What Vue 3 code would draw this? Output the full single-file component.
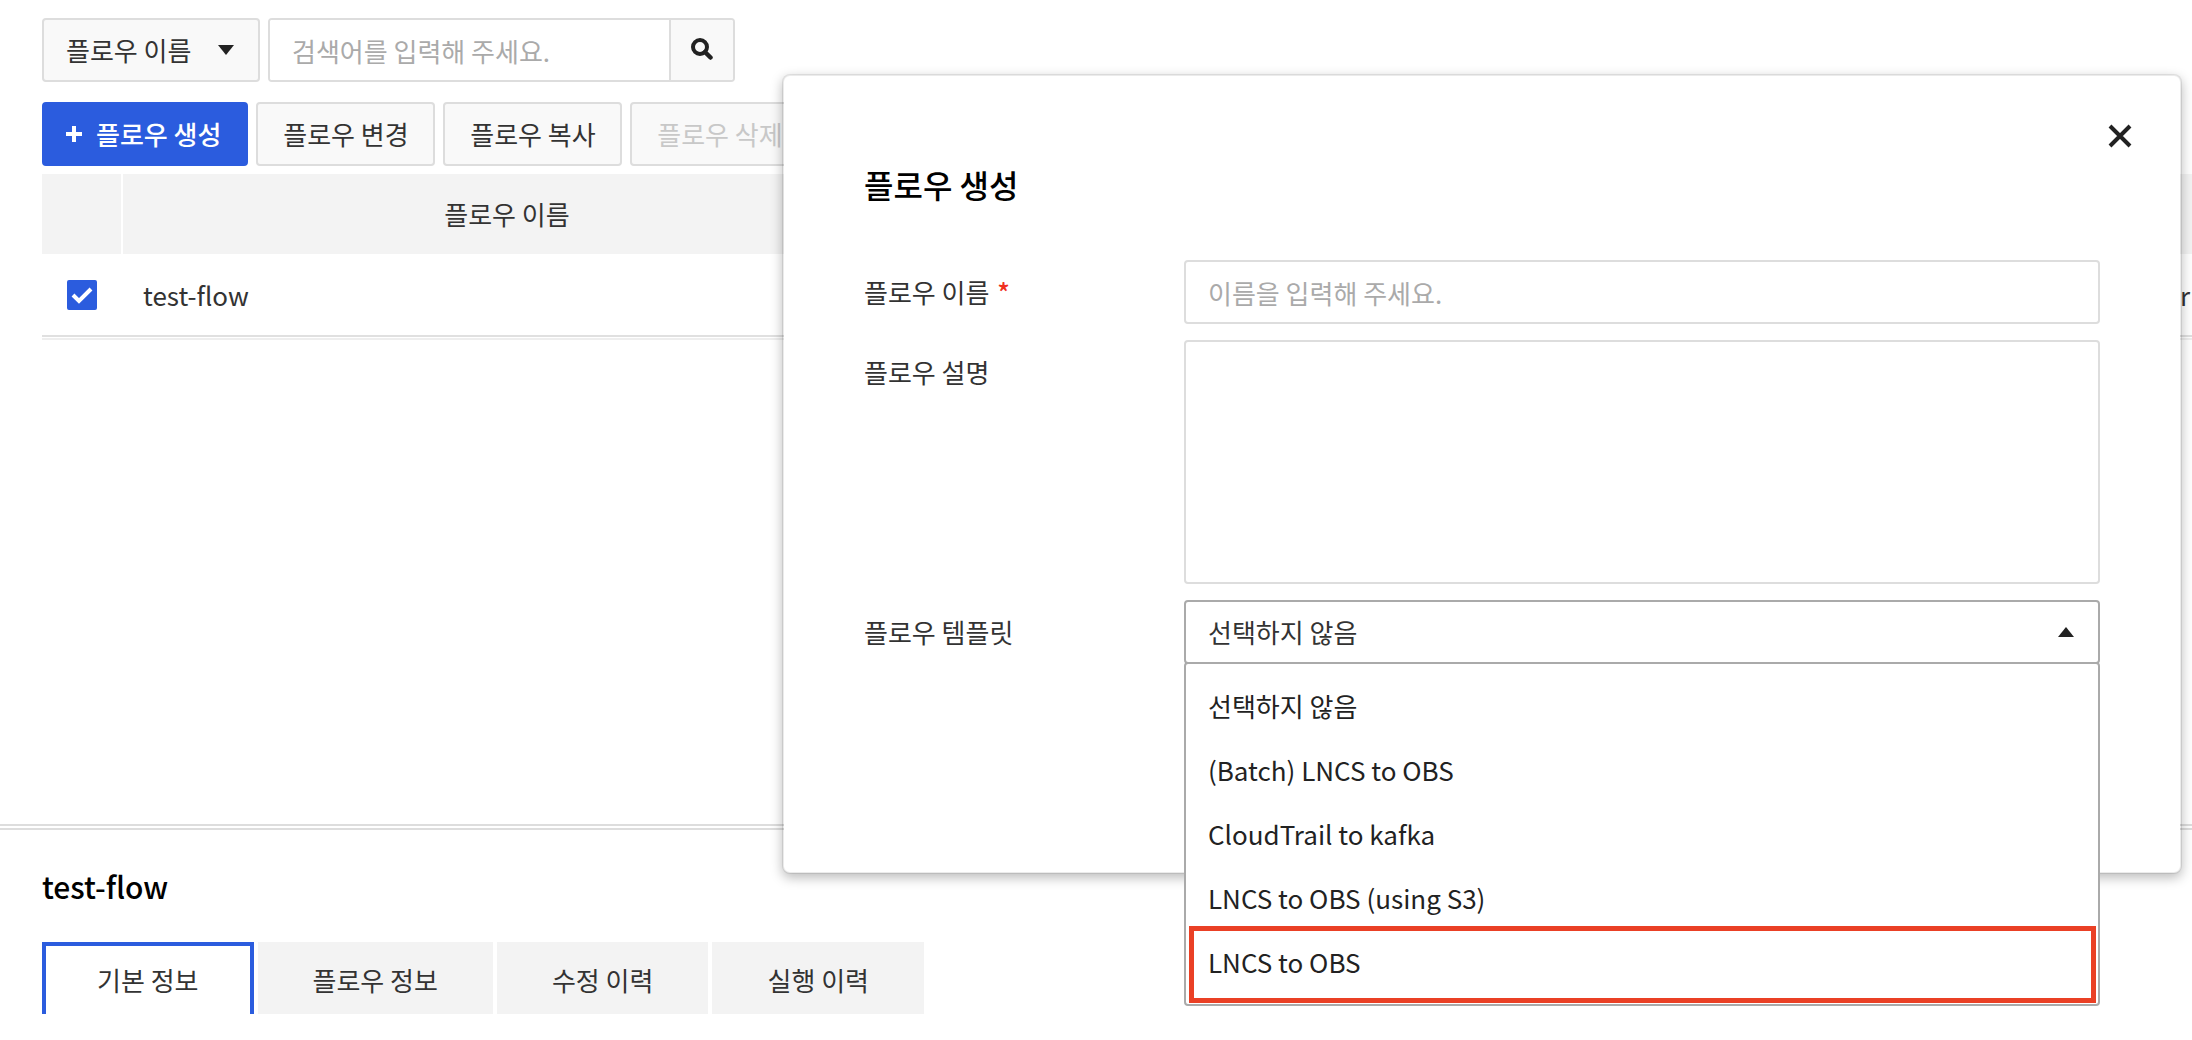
<template>
    <div class="page">
        <section class="flow-list">
            <div class="toolbar">
                <div class="select-wrap filter">
                    <select v-model="filter" class="filter-select" aria-label="플로우 이름">
                        <option value="name">플로우 이름</option>
                    </select>
                    <svg class="caret" viewBox="0 0 16 10"><path d="M0 0h16L8 10z" /></svg>
                </div>
                <form class="search" @submit.prevent>
                    <input v-model="keyword" type="text" placeholder="검색어를 입력해 주세요." aria-label="검색어를 입력해 주세요.">
                    <button type="submit">
                        <svg viewBox="0 0 22 22">
                            <circle cx="9" cy="9" r="7" fill="none" stroke="#222" stroke-width="4" />
                            <path d="M14 14l5.500 5.500" stroke="#222" stroke-width="4.500" stroke-linecap="round" />
                        </svg>
                    </button>
                </form>
            </div>
            <div class="actions">
                <button class="btn btn-primary" type="button" @click="modalOpen = true">
                    <svg viewBox="0 0 16 16"><path d="M6 0h4v6h6v4h-6v6H6v-6H0V6h6z" /></svg>
                    플로우 생성
                </button>
                <button class="btn" type="button">플로우 변경</button>
                <button class="btn" type="button">플로우 복사</button>
                <button class="btn" type="button" disabled>플로우 삭제</button>
            </div>
            <div class="table-wrap">
                <table>
                    <colgroup>
                        <col class="col-check">
                        <col class="col-name">
                        <col>
                    </colgroup>
                    <thead>
                        <tr>
                            <th></th>
                            <th>플로우 이름</th>
                            <th></th>
                        </tr>
                    </thead>
                    <tbody>
                        <tr v-for="flow in flows" :key="flow.name">
                            <td class="cell-check">
                                <label class="check">
                                    <input v-model="flow.checked" type="checkbox" :aria-label="flow.name">
                                    <svg viewBox="0 0 30 30"><path d="M6 15l6 6L24 9" /></svg>
                                </label>
                            </td>
                            <td>{{ flow.name }}</td>
                            <td class="cell-end">{{ flow.owner }}</td>
                        </tr>
                    </tbody>
                </table>
            </div>
        </section>

        <section class="flow-detail">
            <h2>test-flow</h2>
            <div class="tabs" role="tablist">
                <button
                    v-for="(tab, index) in tabs"
                    :key="tab"
                    type="button"
                    role="tab"
                    :aria-selected="activeTab === index"
                    :class="{ active: activeTab === index }"
                    @click="activeTab = index"
                >
                    {{ tab }}
                </button>
            </div>
        </section>

        <div v-if="modalOpen" class="modal" role="dialog" aria-labelledby="modal-title">
            <button class="modal-close" type="button" @click="modalOpen = false">
                <svg viewBox="0 0 24 24"><path d="M2 2l20 20M22 2L2 22" /></svg>
            </button>
            <h1 id="modal-title">플로우 생성</h1>
            <div class="form-row">
                <label for="flow-name">플로우 이름 <span class="required">*</span></label>
                <input id="flow-name" v-model="form.name" type="text" placeholder="이름을 입력해 주세요.">
            </div>
            <div class="form-row">
                <label for="flow-desc">플로우 설명</label>
                <textarea id="flow-desc" v-model="form.description"></textarea>
            </div>
            <div class="form-row">
                <label for="flow-template">플로우 템플릿</label>
                <div class="select-wrap">
                    <select id="flow-template" v-model="form.template">
                        <option v-for="item in templates" :key="item" :value="item">{{ item }}</option>
                    </select>
                    <svg class="caret" viewBox="0 0 16 10"><path d="M0 10h16L8 0z" /></svg>
                    <ul class="dropdown">
                        <li
                            v-for="(item, index) in templates"
                            :key="item"
                            :class="{ marked: index === templates.length - 1 }"
                            @click="form.template = item"
                        >
                            {{ item }}
                        </li>
                    </ul>
                </div>
            </div>
        </div>
    </div>
</template>

<script setup>
import { ref, reactive } from 'vue';

const filter = ref('name');
const keyword = ref('');
const modalOpen = ref(true);
const activeTab = ref(0);

const flows = ref([
    { name: 'test-flow', owner: 'r', checked: true },
]);

const tabs = ['기본 정보', '플로우 정보', '수정 이력', '실행 이력'];

const templates = [
    '선택하지 않음',
    '(Batch) LNCS to OBS',
    'CloudTrail to kafka',
    'LNCS to OBS (using S3)',
    'LNCS to OBS',
];

const form = reactive({
    name: '',
    description: '',
    template: templates[0],
});
</script>

<style>
body {
    margin: 0;
    background: #fff;
}
</style>

<style scoped>
* {
    box-sizing: border-box;
}

.page {
    position: relative;
    display: flex;
    flex-direction: column;
    min-height: 100vh;
    overflow: hidden;
    font-family: "Noto Sans CJK KR", sans-serif;
    font-size: 26px;
    line-height: 38px;
    color: #333;
}

button,
input,
select,
textarea {
    margin: 0;
    font: inherit;
    color: inherit;
}

button {
    cursor: pointer;
}

.flow-list {
    flex: 1;
    padding: 18px 0 0 42px;
}

.toolbar,
.actions {
    display: flex;
    gap: 8px;
}

.toolbar {
    margin-bottom: 20px;
}

.actions {
    margin-bottom: 8px;
}

.select-wrap {
    position: relative;
}

select {
    display: block;
    width: 100%;
    height: 64px;
    padding: 0 48px 0 22px;
    border: 2px solid #aaa;
    border-radius: 4px;
    background: #fff;
    appearance: none;
}

.filter {
    width: 218px;
}

.filter-select {
    border-color: #ddd;
    background: #f9f9f9;
}

.caret {
    position: absolute;
    top: 27px;
    right: 26px;
    width: 16px;
    height: 10px;
    fill: #222;
    pointer-events: none;
}

.search {
    display: flex;
    width: 467px;
    height: 64px;
    border: 2px solid #ddd;
    border-radius: 4px;
    overflow: hidden;
}

.search input {
    flex: 1;
    min-width: 0;
    padding: 2px 22px 0;
    border: none;
    background: #fff;
}

.search button {
    display: flex;
    align-items: center;
    justify-content: center;
    width: 64px;
    padding: 0 0 2px;
    border: none;
    border-left: 2px solid #ddd;
    background: #f9f9f9;
}

.search svg {
    width: 22px;
    height: 22px;
}

::placeholder {
    color: #aaa;
    opacity: 1;
}

.btn {
    display: flex;
    align-items: center;
    justify-content: center;
    min-width: 179px;
    height: 64px;
    padding: 0 24px;
    border: 2px solid #ddd;
    border-radius: 4px;
    background: #f9f9f9;
    white-space: nowrap;
}

.btn:disabled {
    color: #c8c8c8;
}

.btn-primary {
    gap: 14px;
    padding: 0 25px 0 22px;
    border-color: #2b5cde;
    background: #2b5cde;
    color: #fff;
    font-weight: 500;
}

.btn-primary svg {
    width: 16px;
    height: 16px;
    fill: #fff;
}

.table-wrap {
    border-bottom: 2px solid #eee;
    padding-bottom: 1px;
}

table {
    width: 100%;
    border-collapse: separate;
    border-spacing: 0;
    table-layout: fixed;
}

.col-check {
    width: 81px;
}

.col-name {
    width: 770px;
}

th {
    height: 80px;
    padding: 0;
    border-right: 2px solid #fff;
    background: #f3f3f3;
    font-weight: 400;
}

th:last-child {
    border-right: none;
}

td {
    height: 83px;
    padding: 0 20px;
    border-bottom: 2px solid #e0e0e0;
}

.cell-check {
    padding: 0 25px;
}

.cell-end {
    padding: 0 2px;
    text-align: right;
}

.check {
    position: relative;
    display: block;
    width: 30px;
    height: 30px;
}

.check input {
    display: block;
    width: 30px;
    height: 30px;
    border: 2px solid #ddd;
    border-radius: 2px;
    appearance: none;
}

.check input:checked {
    border-color: #2b5cde;
    background: #2b5cde;
}

.check svg {
    position: absolute;
    inset: 0;
    fill: none;
    stroke: #fff;
    stroke-width: 4;
    pointer-events: none;
}

.flow-detail {
    padding: 34px 42px 26px;
    border-top: 6px double #ddd;
}

h2 {
    margin: 0 0 34px;
    font-size: 30px;
    line-height: 44px;
    font-weight: 500;
    color: #000;
}

.tabs {
    display: flex;
    gap: 4px;
}

.tabs button {
    height: 72px;
    padding: 0 51px;
    border: 4px solid #f3f3f3;
    border-bottom: none;
    background: #f3f3f3;
}

.tabs button.active {
    border-color: #2b5cde;
    background: #fff;
}

.modal {
    position: absolute;
    top: 74px;
    left: 782px;
    right: 10px;
    min-height: 800px;
    padding: 84px 80px;
    border: 2px solid rgba(0, 0, 0, 0.08);
    border-radius: 8px;
    background: #fff;
    background-clip: padding-box;
    box-shadow: 0 4px 12px rgba(0, 0, 0, 0.26);
}

.modal-close {
    position: absolute;
    top: 48px;
    right: 48px;
    width: 24px;
    height: 24px;
    padding: 0;
    border: none;
    background: none;
}

.modal-close svg {
    display: block;
    fill: none;
    stroke: #222;
    stroke-width: 4;
}

h1 {
    margin: 0 0 52px;
    font-size: 32px;
    line-height: 48px;
    font-weight: 500;
    color: #000;
}

.form-row {
    display: grid;
    grid-template-columns: 320px 1fr;
    align-items: start;
    margin-bottom: 16px;
}

.form-row > label {
    padding: 13px 0;
}

.required {
    margin-left: 2px;
    color: #f03020;
    font-weight: 500;
}

.form-row > input,
textarea {
    display: block;
    width: 100%;
    height: 64px;
    padding: 0 22px;
    border: 2px solid #ddd;
    border-radius: 4px;
    background: #fff;
}

textarea {
    height: 244px;
    padding: 12px 22px;
    resize: none;
}

.dropdown {
    position: absolute;
    top: 62px;
    left: 0;
    right: 0;
    margin: 0;
    padding: 10px 2px;
    border: 2px solid #aaa;
    border-radius: 4px;
    background: #fff;
    color: #222;
    list-style: none;
}

.dropdown li {
    position: relative;
    padding: 13px 20px;
    cursor: pointer;
}

/* frame around the highlighted template */
.dropdown li.marked::after {
    content: "";
    position: absolute;
    inset: -4px 0 -9px 1px;
    border: 5px solid #ea4025;
}
</style>
